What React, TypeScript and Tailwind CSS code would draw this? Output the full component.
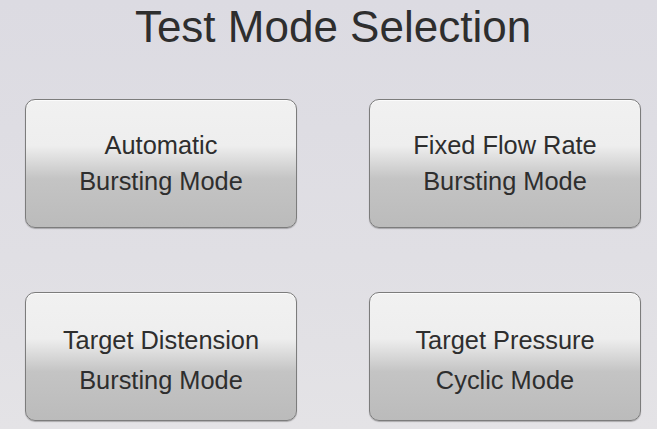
const MODES: { lines: [string, string]; tall?: boolean }[] = [
  { lines: ['Automatic', 'Bursting Mode'] },
  { lines: ['Fixed Flow Rate', 'Bursting Mode'] },
  { lines: ['Target Distension', 'Bursting Mode'], tall: true },
  { lines: ['Target Pressure', 'Cyclic Mode'], tall: true },
];

function ModeButton({ lines, tall }: { lines: [string, string]; tall?: boolean }) {
  return (
    <button
      type="button"
      className="flex h-[129px] flex-col items-center justify-start rounded-[10px] border border-[#7c7c7c] bg-[linear-gradient(to_bottom,#f1f1f1_0%,#eeeeee_36%,#c4c4c4_62%,#bbbbbb_100%)] pt-[27px] font-[family-name:'Liberation_Sans',Arial,sans-serif] text-[25.4px] text-[#2e2e2e] shadow-[0_1px_1px_rgba(0,0,0,0.25),inset_0_1px_0_rgba(255,255,255,0.7)]"
    >
      {lines.map((l) => (
        <span key={l} className={tall ? 'leading-[40px]' : 'leading-[36px]'}>
          {l}
        </span>
      ))}
    </button>
  );
}

export default function App() {
  return (
    <div className="h-[429px] w-[657px] overflow-hidden bg-[linear-gradient(to_bottom,#dcdbe2_0%,#e0dfe4_60%,#e4e3e6_100%)] pl-[25px] font-[family-name:'Liberation_Sans',Arial,sans-serif]">
      <div className="w-[616px]">
        <h1 className="pt-[5px] text-center text-[44px] leading-[43px] text-[#2e2e2e]">Test Mode Selection</h1>
        <div className="mt-[51px] grid grid-cols-[272px_272px] gap-x-[72px] gap-y-[64px]">
          {MODES.map((m) => (
            <ModeButton key={m.lines.join(' ')} lines={m.lines} tall={m.tall} />
          ))}
        </div>
      </div>
    </div>
  );
}
